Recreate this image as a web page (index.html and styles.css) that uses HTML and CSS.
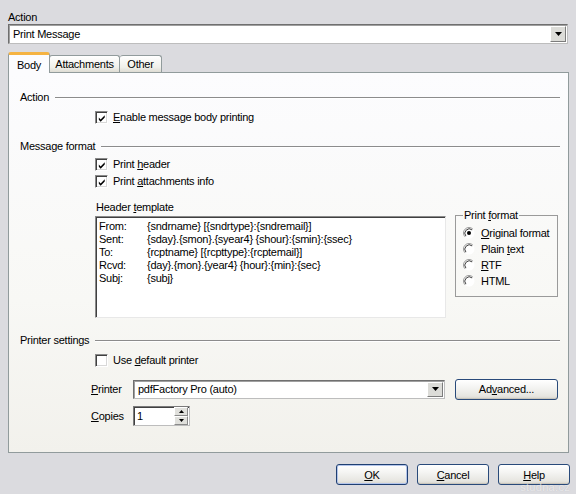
FILE: index.html
```html
<!DOCTYPE html>
<html>
<head>
<meta charset="utf-8">
<link rel="stylesheet" href="styles.css">
</head>
<body>
<div class="dlg">
  <div class="top-label">Action</div>
  <div class="combo main-combo">
    <span class="combo-text">Print Message</span>
    <span class="drop"><svg width="7" height="4" viewBox="0 0 7 4"><path d="M0 0H7L3.5 4Z" fill="#000"/></svg></span>
  </div>
  <div class="tabs">
    <div class="tab active">Body</div>
    <div class="tab">Attachments</div>
    <div class="tab">Other</div>
  </div>
  <div class="panel">
    <div class="sec-head first"><span>Action</span><i class="rule"></i></div>
    <div class="check gap-7"><span class="cb"><svg width="11" height="11" viewBox="0 0 11 11"><path d="M2 4.5L4 6.5L8.5 2V4.5L4 9L2 7Z" fill="#000"/></svg></span><span><u>E</u>nable message body printing</span></div>

    <div class="sec-head sec-mf"><span>Message format</span><i class="rule"></i></div>
    <div class="check gap-5"><span class="cb"><svg width="11" height="11" viewBox="0 0 11 11"><path d="M2 4.5L4 6.5L8.5 2V4.5L4 9L2 7Z" fill="#000"/></svg></span><span>Print <u>h</u>eader</span></div>
    <div class="check gap-4"><span class="cb"><svg width="11" height="11" viewBox="0 0 11 11"><path d="M2 4.5L4 6.5L8.5 2V4.5L4 9L2 7Z" fill="#000"/></svg></span><span>Print <u>a</u>ttachments info</span></div>

    <div class="template-row">
      <div class="template-col">
        <div class="small-label">Header <u>t</u>emplate</div>
        <div class="memo">
          <span>From:</span><span>{sndrname} [{sndrtype}:{sndremail}]</span>
          <span>Sent:</span><span>{sday}.{smon}.{syear4} {shour}:{smin}:{ssec}</span>
          <span>To:</span><span>{rcptname} [{rcpttype}:{rcptemail}]</span>
          <span>Rcvd:</span><span>{day}.{mon}.{year4} {hour}:{min}:{sec}</span>
          <span>Subj:</span><span>{subj}</span>
        </div>
      </div>
      <fieldset class="pf">
        <legend>Print <u>f</u>ormat</legend>
        <div class="radio"><svg class="rb" width="12" height="12" viewBox="0 0 12 12"><circle cx="6" cy="6" r="5.5" fill="#fff"/><path d="M2.1 9.9A5.5 5.5 0 0 1 9.9 2.1" stroke="#9a9a9a" fill="none"/><path d="M2.9 9.1A4.4 4.4 0 0 1 9.1 2.9" stroke="#404040" fill="none"/><circle cx="6" cy="6" r="2" fill="#000"/></svg><span><u>O</u>riginal format</span></div>
        <div class="radio"><svg class="rb" width="12" height="12" viewBox="0 0 12 12"><circle cx="6" cy="6" r="5.5" fill="#fff"/><path d="M2.1 9.9A5.5 5.5 0 0 1 9.9 2.1" stroke="#9a9a9a" fill="none"/><path d="M2.9 9.1A4.4 4.4 0 0 1 9.1 2.9" stroke="#404040" fill="none"/></svg><span>Plain <u>t</u>ext</span></div>
        <div class="radio"><svg class="rb" width="12" height="12" viewBox="0 0 12 12"><circle cx="6" cy="6" r="5.5" fill="#fff"/><path d="M2.1 9.9A5.5 5.5 0 0 1 9.9 2.1" stroke="#9a9a9a" fill="none"/><path d="M2.9 9.1A4.4 4.4 0 0 1 9.1 2.9" stroke="#404040" fill="none"/></svg><span><u>R</u>TF</span></div>
        <div class="radio"><svg class="rb" width="12" height="12" viewBox="0 0 12 12"><circle cx="6" cy="6" r="5.5" fill="#fff"/><path d="M2.1 9.9A5.5 5.5 0 0 1 9.9 2.1" stroke="#9a9a9a" fill="none"/><path d="M2.9 9.1A4.4 4.4 0 0 1 9.1 2.9" stroke="#404040" fill="none"/></svg><span>HTML</span></div>
      </fieldset>
    </div>

    <div class="sec-head sec-ps"><span>Printer settings</span><i class="rule"></i></div>
    <div class="check gap-7"><span class="cb"></span><span>Use <u>d</u>efault printer</span></div>

    <div class="field-row printer-row">
      <span class="flabel"><u>P</u>rinter</span>
      <div class="combo printer-combo">
        <span class="combo-text">pdfFactory Pro (auto)</span>
        <span class="drop"><svg width="7" height="4" viewBox="0 0 7 4"><path d="M0 0H7L3.5 4Z" fill="#000"/></svg></span>
      </div>
      <button class="btn adv">Ad<u>v</u>anced...</button>
    </div>
    <div class="field-row copies-row">
      <span class="flabel"><u>C</u>opies</span>
      <div class="spin">
        <span class="spin-text">1</span>
        <span class="spin-btns">
          <span class="sbtn"><svg width="5" height="3" viewBox="0 0 5 3"><path d="M0 3H5L2.5 0Z" fill="#000"/></svg></span>
          <span class="sbtn"><svg width="5" height="3" viewBox="0 0 5 3"><path d="M0 0H5L2.5 3Z" fill="#000"/></svg></span>
        </span>
      </div>
    </div>
  </div>
  <div class="buttons">
    <button class="btn main default"><u>O</u>K</button>
    <button class="btn main"><u>C</u>ancel</button>
    <button class="btn main"><u>H</u>elp</button>
  </div>
  <div class="watermark">studna.cz</div>
</div>
</body>
</html>
```
FILE: styles.css
```css
* { box-sizing: border-box; }
html, body { margin: 0; padding: 0; }
body {
  width: 576px;
  height: 494px;
  overflow: hidden;
  background: #dbdbdf;
  font-family: "Liberation Sans", Arial, sans-serif;
  font-size: 11px;
  line-height: 13px;
  letter-spacing: -0.25px;
  color: #000;
}
u { text-decoration: underline; text-underline-offset: 1px; }

.dlg {
  position: relative;
  height: 494px;
  padding: 11px 7px 0 8px;
}
.top-label { height: 13px; padding-left: 0; }

.combo {
  display: flex;
  align-items: center;
  background: #fff;
  border: 1px solid;
  border-color: #6f6f6f #bdbdbd #bdbdbd #6f6f6f;
  box-shadow: inset 1px 1px 0 #a0a0a0;
}
.combo-text { flex: 1; padding-left: 4px; white-space: nowrap; }
.main-combo { height: 20px; margin-right: 1px; }
.drop {
  width: 16px;
  height: 16px;
  margin-right: 1px;
  display: flex;
  align-items: center;
  justify-content: center;
  background: #dcdcd8;
  border: 1px solid;
  border-color: #ffffff #7c7c7c #7c7c7c #ffffff;
}

.tabs {
  display: flex;
  align-items: flex-end;
  height: 20px;
  margin-top: 8px;
}
.tab {
  height: 17px;
  padding-top: 2px;
  text-align: center;
  border: 1px solid #919b9c;
  border-bottom: none;
  border-left: none;
  border-radius: 3px 3px 0 0;
  background: linear-gradient(#ffffff, #f0f0ea 70%, #dedcd4);
}
.tab:nth-child(2) { width: 71px; border-left: 1px solid #919b9c; }
.tab:nth-child(3) { width: 42px; }
.tab.active {
  position: relative;
  z-index: 1;
  width: 42px;
  height: 21px;
  margin-bottom: -1px;
  padding-top: 4px;
  border-left: 1px solid #919b9c;
  border-right: 1px solid #919b9c;
  border-top: 3px solid #f5b342;
  background: #fcfcfe;
  margin-right: -1px;
}

.panel {
  width: 561px;
  height: 381px;
  border: 1px solid #919b9c;
  background: linear-gradient(#fcfcfe, #f8f8f5 60%, #f2f1ec);
  padding: 0 8px 0 11px;
}

.sec-head {
  display: flex;
  align-items: center;
  height: 13px;
}
.sec-head .rule {
  flex: 1;
  height: 0;
  border-top: 1px solid #8c8c8c;
  border-bottom: 1px solid #ffffff;
  margin-left: 6px;
  margin-top: 1px;
}
.sec-head.first { margin-top: 18px; }
.sec-mf { margin-top: 16px; }
.sec-ps { margin-top: 16px; }

.check {
  display: flex;
  align-items: center;
  height: 13px;
  margin-left: 75px;
}
.gap-7 { margin-top: 7px; }
.gap-5 { margin-top: 5px; }
.gap-4 { margin-top: 4px; }
.cb {
  width: 13px;
  height: 13px;
  margin-right: 5px;
  background: #fff;
  border: 1px solid;
  border-color: #8a8a8a #ffffff #ffffff #8a8a8a;
  box-shadow: inset 1px 1px 0 #404040, inset -1px -1px 0 #d8d8d8;
  display: flex;
  align-items: center;
  justify-content: center;
  padding: 0;
}
.cb svg { display: block; margin: 1px 0 0 1px; }

.template-row {
  display: flex;
  margin-top: 13px;
  margin-left: 75px;
}
.template-col { width: 351px; }
.small-label { height: 13px; padding-left: 1px; margin-bottom: 2px; }
.memo {
  height: 102px;
  background: #fff;
  border: 1px solid;
  border-color: #8a8a8a #e8e8e8 #e8e8e8 #8a8a8a;
  box-shadow: inset 1px 1px 0 #404040;
  padding: 3px 3px 0 3px;
  display: grid;
  grid-template-columns: 48px 1fr;
  grid-auto-rows: 13px;
  align-content: start;
  white-space: nowrap;
}

.pf {
  width: 103px;
  height: 88px;
  margin: 8px 0 0 9px;
  border: 1px solid #9a9a9a;
  padding: 3px 0 0 7px;
}
.pf legend { padding: 0 1px; line-height: 13px; }
.radio {
  display: flex;
  align-items: center;
  height: 16px;
}
.rb { display: block; margin-right: 6px; }

.field-row {
  display: flex;
  align-items: center;
  margin-left: 71px;
}
.printer-row { margin-top: 12px; height: 20px; }
.copies-row { margin-top: 7px; height: 20px; }
.flabel { width: 42px; }
.printer-combo { width: 312px; height: 19px; }
.printer-combo .drop { width: 16px; height: 15px; }

.btn {
  font-family: inherit;
  font-size: 11px;
  letter-spacing: -0.25px;
  color: #000;
  padding: 0;
  border: 1px solid #294a7a;
  border-radius: 3px;
  background: linear-gradient(#ffffff, #f4f4f2 40%, #e6e5e0 85%, #d6d3ca);
  box-shadow: inset 0 -1px 0 #c9c6bd;
}
.adv { width: 103px; height: 21px; margin-left: 10px; }

.spin {
  display: flex;
  align-items: center;
  width: 57px;
  height: 20px;
  background: #fff;
  border: 1px solid;
  border-color: #7a7a7a #bdbdbd #bdbdbd #7a7a7a;
  box-shadow: inset 1px 1px 0 #404040;
}
.spin-text { flex: 1; padding-left: 3px; }
.spin-btns {
  display: flex;
  flex-direction: column;
  width: 14px;
  height: 18px;
  margin-right: 1px;
}
.sbtn {
  flex: 1;
  display: flex;
  align-items: center;
  justify-content: center;
  background: #e0e0dc;
  border: 1px solid;
  border-color: #ffffff #8a8a8a #8a8a8a #ffffff;
}

.buttons {
  display: flex;
  justify-content: flex-end;
  gap: 9px;
  margin-top: 11px;
  margin-right: -1px;
}
.btn.main { width: 72px; height: 21px; }
.btn.default {
  border-color: #1f3f72;
  box-shadow: inset 0 0 0 1px #b3c4ea, inset 0 -1px 0 #c9c6bd;
}

.watermark {
  position: absolute;
  right: 6px;
  bottom: 1px;
  font-size: 11px;
  line-height: 12px;
  color: rgba(255, 255, 255, 0.65);
  letter-spacing: 0.3px;
  text-shadow: 0 0 1px rgba(120, 120, 130, 0.35);
}
```
